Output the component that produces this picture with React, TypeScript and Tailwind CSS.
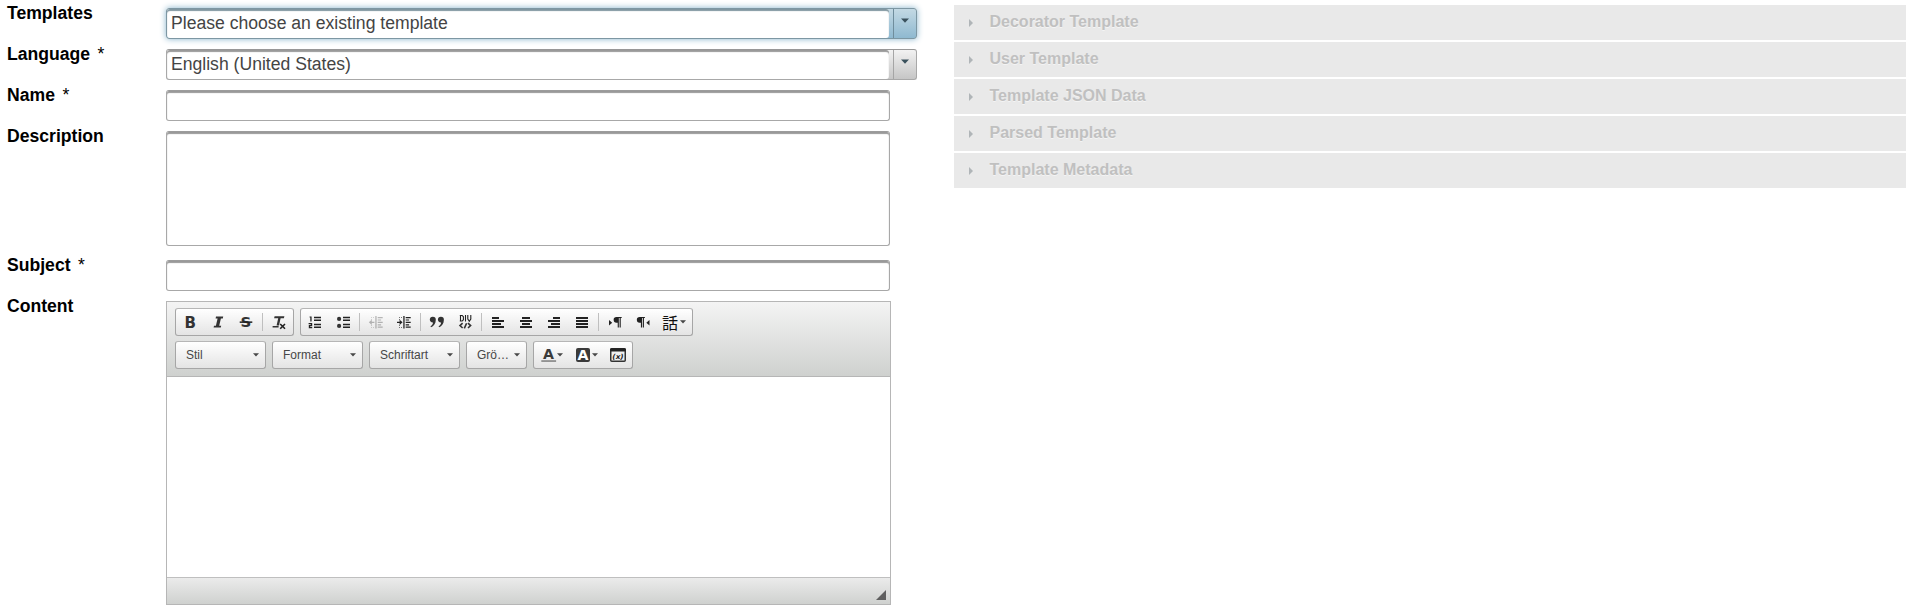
import React from "react";

const field =
  "rounded-[3px] border border-[#a8a8a8] border-t-[#9c9c9c] bg-white shadow-[inset_0_2px_1px_#999] outline-none";

function Row({ label, required, gap, children }: { label: string; required?: boolean; gap: string; children?: React.ReactNode }) {
  return (
    <div className={"flex items-start " + gap}>
      <div className="-mt-[6px] w-[159px] shrink-0 whitespace-pre text-[17.6px] leading-[22px] font-bold text-black">
        {label}
        {required && <span className="ml-[7.5px] font-normal">*</span>}
      </div>
      {children}
    </div>
  );
}

function Select({ value, active }: { value: string; active?: boolean }) {
  return (
    <div
      className={
        "flex h-[31px] w-[751px] rounded-[3px] border " +
        (active
          ? "border-[#7d97a3] bg-linear-to-b from-[#c3d9e4] to-[#8fb9d0] shadow-[0_0_6px_#85b2cb]"
          : "border-[#a8a8a8] border-t-[#979797] bg-linear-to-b from-[#f2f2f2] to-[#c6c6c6]")
      }
    >
      <div
        className={
          "h-[29px] w-[722px] shrink-0 rounded-[3px] bg-white pl-[4px] text-[17.6px] leading-[28px] text-[#444] " +
          (active ? "shadow-[inset_0_2px_1px_#8197a1]" : "shadow-[inset_0_2px_1px_#999]")
        }
      >
        {value}
      </div>
      <div className={"ml-[4px] flex flex-1 justify-center border-l pt-[9px] " + (active ? "border-[#6f8d9c]" : "border-[#a5a5a5]")}>
        <svg width="8" height="5" viewBox="0 0 8 5">
          <path d="M0 0.5h8L4 4.8z" fill="#3a515c" />
        </svg>
      </div>
    </div>
  );
}

function Icon({ children, dim }: { children: React.ReactNode; dim?: boolean }) {
  return (
    <span className={"flex h-[26px] w-[28px] items-center justify-center " + (dim ? "opacity-30" : "")}>
      <svg className="overflow-visible" width="16" height="16" viewBox="0 0 16 16" fill="#222" stroke="none">
        {children}
      </svg>
    </span>
  );
}

const Sep = () => <span className="mx-[2px] h-[18px] w-px bg-[#bfbfbf]" />;

const group =
  "flex h-[28px] items-center rounded-[3px] border border-[#a6a6a6] border-t-[#b6b6b6] bg-linear-to-b from-white to-[#e4e4e4]";

function Caret() {
  return (
    <svg width="6" height="4" viewBox="0 0 6 4">
      <path d="M0 0.3h6L3 3.6z" fill="#474747" />
    </svg>
  );
}

function Combo({ label, w }: { label: string; w: string }) {
  return (
    <div className={group + " justify-between pr-[6px] pl-[10px] text-[12px] text-[#474747] " + w}>
      <span>{label}</span>
      <Caret />
    </div>
  );
}

function Bars({ rows }: { rows: [number, number][] }) {
  return (
    <Icon>
      {rows.map(([x, w], i) => (
        <rect key={i} x={x} y={3 + i * 3} width={w} height="2" />
      ))}
    </Icon>
  );
}

const glyph = "DejaVu Sans";

function Indent({ dim }: { dim?: boolean }) {
  return (
    <Icon dim={dim}>
      <path d="M7.3 2h1.3v12.5H7.3z" />
      <path d="M9.7 3h5v1.2h-5z M9.7 5.4h3.4v1.2H9.7z M9.7 7.8h5V9h-5z M9.7 10.2h3.4v1.2H9.7z M9.7 12.6h5v1.2h-5z" />
      <path d="M3 3h1v1H3z M5 3h1v1H5z M3 5h1v1H3z M3 13h1v1H3z M5 13h1v1H5z M3 11h1v1H3z" opacity=".6" />
      {dim ? <path d="M0.8 8.3l3-2.6v2h2.6V9H3.8v2z" /> : <path d="M6.6 8.3l-3-2.6v2H1V9h2.6v2z" />}
    </Icon>
  );
}

const pilcrow = "M4.5 0H10v1H9v10H7.8V1H7v10H5.8V6H4.5A3 3 0 0 1 4.5 0z";

const lines = "M7 2.8h7v1.5H7z M7 5.6h7v1.5H7z M7 9.8h7v1.5H7z M7 12.6h7v1.5H7z";

function Toolbar() {
  return (
    <div className="h-[75px] border-b border-[#b6b6b6] bg-linear-to-b from-[#f4f4f4] to-[#cfd1cf] pt-[6px] pl-[8px]">
      <div className="flex gap-[6px]">
        <div className={group + " w-[119px]"}>
          <Icon>
            <text x="2.4" y="13.6" fontFamily={glyph} fontWeight="bold" fontSize="15" fill="#333" textLength="11.5" lengthAdjust="spacingAndGlyphs">B</text>
          </Icon>
          <Icon>
            <path fill="#333" d="M6 2.6h7.2l-.4 1.8h-1.9l-1.7 7.4h2l-.4 1.8H3.6l.4-1.8h1.9l1.7-7.4H5.6z" />
          </Icon>
          <Icon>
            <text x="2.6" y="13.4" fontFamily={glyph} fontWeight="bold" fontSize="14.5" fill="#333" textLength="10.8" lengthAdjust="spacingAndGlyphs">S</text>
            <rect x="1.7" y="7.4" width="12.6" height="1.5" fill="#222" />
          </Icon>
          <Sep />
          <Icon>
            <path fill="#333" d="M3.6 2.2h9.8l-.5 2.1H9.6l-1.6 7.3H5.6l1.6-7.3H3.1z M1.6 12h6v1.5h-6z" />
            <path d="M9.2 10l4.8 4.8M14 10l-4.8 4.8" stroke="#222" strokeWidth="1.6" />
          </Icon>
        </div>
        <div className={group + " w-[393px]"}>
          <Icon>
            <path d="M2.6 2.4h2v5H3.3V3.6h-.7z M1.6 9h3.6v3.2H3.2v.8h2v1.2H1.8v-3.1h2v-.9H1.6z" />
            <path d={lines} />
          </Icon>
          <Icon>
            <circle cx="4.1" cy="4.9" r="2.1" fill="#333" />
            <circle cx="4.1" cy="11.9" r="2.1" fill="#333" />
            <path d={lines} transform="translate(1 0)" />
          </Icon>
          <Sep />
          <Indent dim />
          <Indent />
          <Sep />
          <Icon>
            <path
              fill="#333"
              d="M0.8 5.6A2.9 2.9 0 0 1 6.8 5.7C6.8 9.5 4.7 12.2 2 13.2L1.5 12.3C3.2 11 4 9.8 4 8.4A2.8 2.8 0 0 1 .8 5.6z M8.9 5.6A2.9 2.9 0 0 1 14.9 5.7C14.9 9.5 12.8 12.2 10.1 13.2L9.6 12.3C11.3 11 12.1 9.8 12.1 8.4A2.8 2.8 0 0 1 8.9 5.6z"
            />
          </Icon>
          <Icon>
            <path
              d="M3.5 1v6.5M2.8 1.5h2.4l1.2 1.2v3L5.2 7H2.8 M8.5 1v6.5 M10.8 1v4l1.5 2.3L13.8 5V1"
              fill="none"
              stroke="#222"
              strokeWidth="1.1"
            />
            <path d="M5.6 9.2L3 11.6l2.6 2.4 M11 9.2l2.6 2.4L11 14 M9.6 9.2l-2.3 5.2" fill="none" stroke="#333" strokeWidth="1.6" />
          </Icon>
          <Sep />
          <Bars rows={[[2, 7], [2, 12], [2, 9], [2, 12]]} />
          <Bars rows={[[4, 8], [2, 12], [4, 8], [2, 12]]} />
          <Bars rows={[[7, 7], [2, 12], [5, 9], [2, 12]]} />
          <Bars rows={[[2, 12], [2, 12], [2, 12], [2, 12]]} />
          <Sep />
          <Icon>
            <path d={pilcrow} transform="translate(5.2 3) scale(.95)" />
            <path d="M2 6l3.2 2.8-3.2 2.8z" />
          </Icon>
          <Icon>
            <path d={pilcrow} transform="translate(0.4 3) scale(.95)" />
            <path d="M14.5 6l-3.2 2.8 3.2 2.8z" />
          </Icon>
          <span className="ml-[5px] flex items-center gap-[2px]">
            <span className="font-['Noto_Sans_CJK_JP',sans-serif] text-[16px] leading-[24px] text-[#111]">話</span>
            <Caret />
          </span>
        </div>
      </div>
      <div className="mt-[5px] flex gap-[6px]">
        <Combo label="Stil" w="w-[91px]" />
        <Combo label="Format" w="w-[91px]" />
        <Combo label="Schriftart" w="w-[91px]" />
        <Combo label="Grö…" w="w-[61px]" />
        <div className={group + " w-[100px] pl-[7px]"}>
          <svg className="overflow-visible" width="16" height="16" viewBox="0 0 16 16" fill="#3a3a3a">
            <text x="2" y="11.6" fontFamily={glyph} fontWeight="bold" fontSize="14" textLength="11" lengthAdjust="spacingAndGlyphs">A</text>
            <rect x="0.3" y="13.2" width="14.8" height="1.7" fill="#8a8a8a" />
          </svg>
          <Caret />
          <svg className="ml-[12px] overflow-visible" width="16" height="16" viewBox="0 0 16 16">
            <rect x="1" y="1" width="14" height="14" rx="2" fill="#3a3a3a" />
            <text x="2.5" y="12.8" fontFamily={glyph} fontWeight="bold" fontSize="13.5" fill="#fff" textLength="11" lengthAdjust="spacingAndGlyphs">A</text>
          </svg>
          <span className="ml-[1px] flex"><Caret /></span>
          <svg className="ml-[12px]" width="16" height="16" viewBox="0 0 16 16">
            <rect x="0.75" y="1.75" width="14.5" height="12.5" rx="1" fill="#f0f0f0" stroke="#333" strokeWidth="1.5" />
            <rect x="0.2" y="1.2" width="15.6" height="3.4" rx="1" fill="#222" />
            <text x="2.3" y="11.5" fontFamily={glyph} fontWeight="bold" fontStyle="italic" fontSize="7" fill="#222" textLength="11.4" lengthAdjust="spacingAndGlyphs">(x)</text>
          </svg>
        </div>
      </div>
    </div>
  );
}

const panels = ["Decorator Template", "User Template", "Template JSON Data", "Parsed Template", "Template Metadata"];

export default function App() {
  return (
    <div className="flex h-[610px] items-start overflow-hidden bg-white font-['Liberation_Sans',Arial,sans-serif]">
      <div className="w-[954px] shrink-0 pt-[8px] pl-[7px]">
        <Row label="Templates" gap="h-[41px]">
          <Select value="Please choose an existing template" active />
        </Row>
        <Row label="Language" required gap="h-[41px]">
          <Select value="English (United States)" />
        </Row>
        <Row label="Name" required gap="h-[41px]">
          <input className={field + " h-[31px] w-[724px]"} />
        </Row>
        <Row label="Description" gap="h-[129px]">
          <textarea className={field + " h-[115px] w-[724px] resize-none"} />
        </Row>
        <Row label="Subject" required gap="h-[41px]">
          <input className={field + " h-[31px] w-[724px]"} />
        </Row>
        <Row label="Content" gap="h-[304px]">
          <div className="flex h-[304px] w-[725px] flex-col border border-[#b6b6b6]">
            <Toolbar />
            <div className="flex-1 bg-white" />
            <div className="flex h-[27px] items-end justify-end border-t border-[#bfbfbf] bg-linear-to-b from-[#ebebeb] to-[#cfd1cf] pr-[4px] pb-[4px]">
              <svg width="10" height="10" viewBox="0 0 10 10">
                <path d="M10 0v10H0z" fill="#5f5f5f" />
              </svg>
            </div>
          </div>
        </Row>
      </div>
      <div className="flex w-[952px] flex-col gap-[2px] pt-[5px]">
        {panels.map((p) => (
          <div key={p} className="flex h-[35px] items-center bg-[#e9e9e9] pb-[2px] pl-[15px]">
            <svg className="mt-[2px]" width="5" height="8" viewBox="0 0 5 8">
              <path d="M0 0L4 4L0 8z" fill="#b0b5b8" />
            </svg>
            <span className="ml-[15.5px] text-[16px] font-bold text-[#c0c0c0] [text-shadow:0_1px_0_#f4f4f4]">{p}</span>
          </div>
        ))}
      </div>
    </div>
  );
}
